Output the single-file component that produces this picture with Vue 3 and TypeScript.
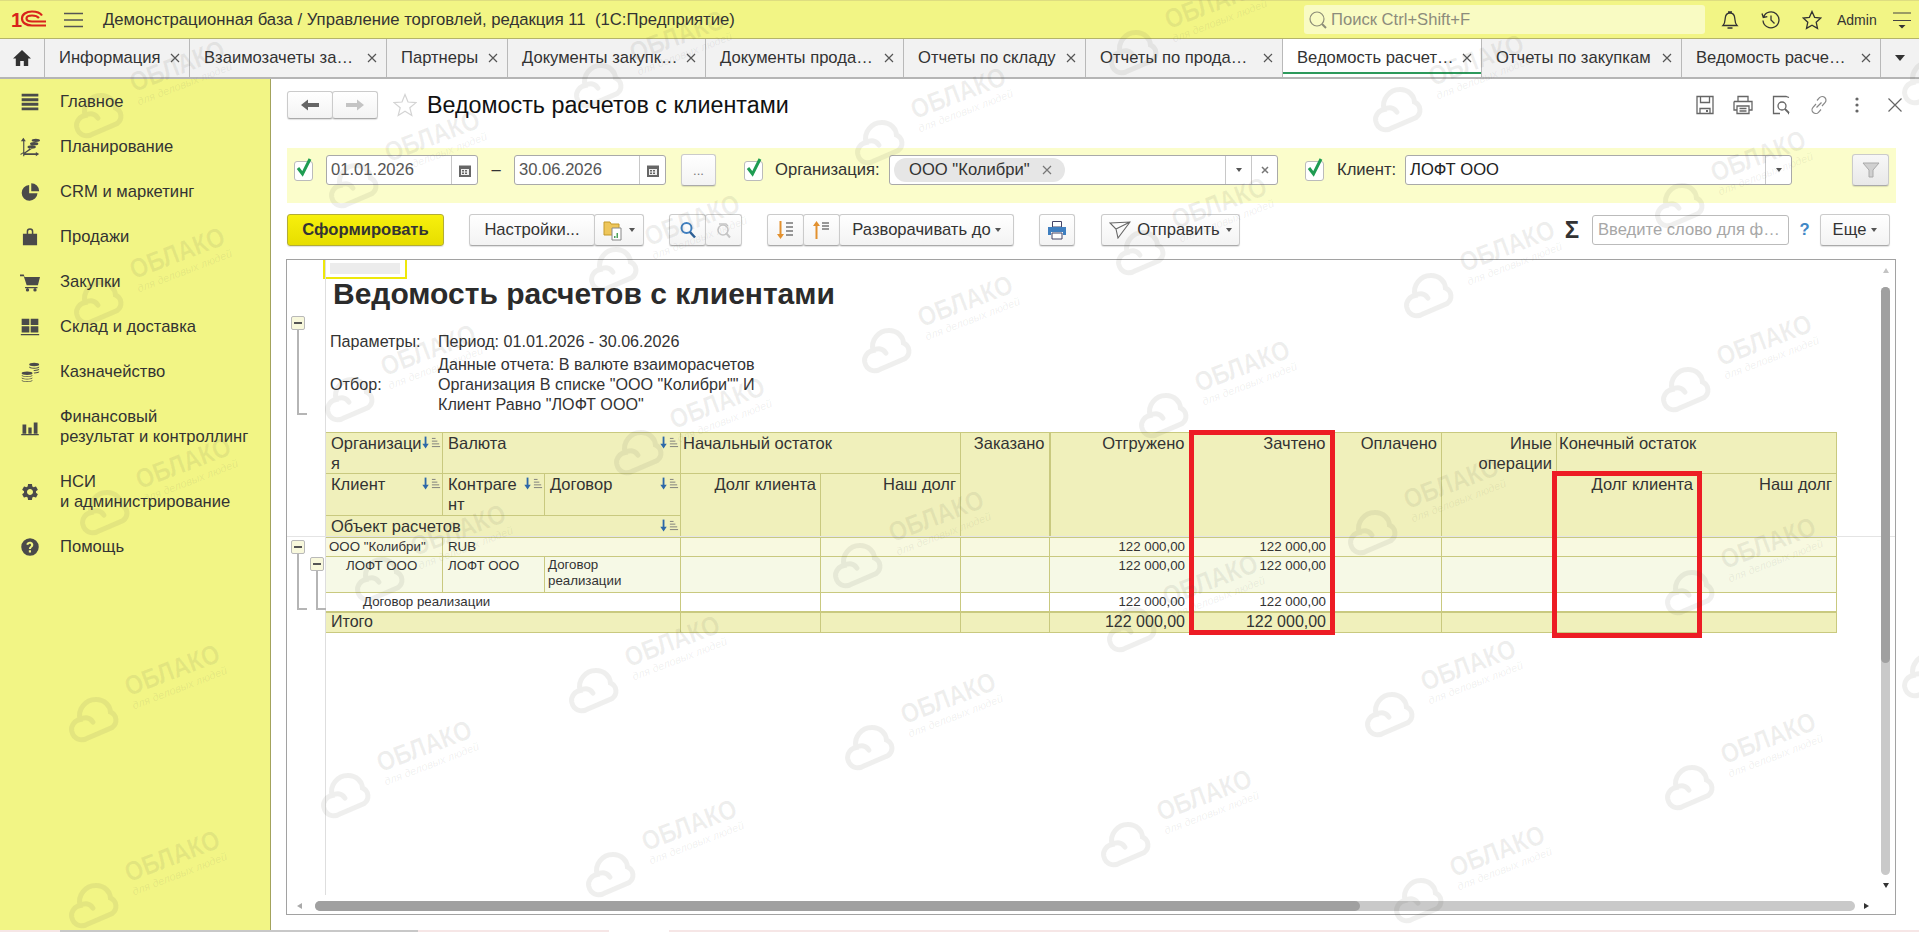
<script setup lang="ts">
type MenuItem = { label: string[]; icon: string }
type Tab = { title: string; width: number; active?: boolean }

const tabs: Tab[] = [
  { title: 'Информация', width: 145 },
  { title: 'Взаимозачеты за…', width: 197 },
  { title: 'Партнеры', width: 121 },
  { title: 'Документы закупк…', width: 198 },
  { title: 'Документы прода…', width: 198 },
  { title: 'Отчеты по складу', width: 182 },
  { title: 'Отчеты по прода…', width: 197 },
  { title: 'Ведомость расчет…', width: 199, active: true },
  { title: 'Отчеты по закупкам', width: 200 },
  { title: 'Ведомость расче…', width: 199 }
]

const menu: MenuItem[] = [
  { label: ['Главное'], icon: 'M2 2h20v3.500H2z M2 7.500h20v3.500H2z M2 13h20v3.500H2z M2 18.500h20v3.500H2z' },
  { label: ['Планирование'], icon: 'M4 1l3 4H5.200v13.500L13 13l1 1.300-7.500 5.200H19V18l4 2.500-4 2.500v-1.500H5.200V23H3.800v-3.500L1 21.500l-.6-1 3.400-2.300V5H1z M12 8a5 2 0 1 0 10 0a5 2 0 1 0-10 0z M14 4a5 2 0 1 0 10 0a5 2 0 1 0-10 0z M9 12a5 2 0 1 0 10 0a5 2 0 1 0-10 0z' },
  { label: ['CRM и маркетинг'], icon: 'M11 3.500a9.500 9.500 0 1 0 10 10H11z M13.500 1.500v9.500H23a9.500 9.500 0 0 0-9.500-9.500z' },
  { label: ['Продажи'], icon: 'M3.500 8h17v14h-17z M8 8V5.500a4 4 0 0 1 8 0V8h-1.800V5.500a2.200 2.200 0 0 0-4.400 0V8z' },
  { label: ['Закупки'], icon: 'M0 3h4.500l1 3H24l-2.500 10H8L4.500 5H0z M6 18h15v1.500H6z M7 21.500a2 2 0 1 0 4 0a2 2 0 1 0-4 0z M16 21.500a2 2 0 1 0 4 0a2 2 0 1 0-4 0z' },
  { label: ['Склад и доставка'], icon: 'M2 2h9.200v7.500H2z M12.800 2H22v7.500h-9.200z M2 11h9.200v7.500H2z M12.800 11H22v7.500h-9.200z M1 20.500h22V22H1z' },
  { label: ['Казначейство'], icon: 'M2 13.500a6.500 2 0 0 1 13 0a6.500 2 0 0 1-13 0z M2 16v-.5c2 2 11 2 13 0v.5a6.500 2 0 0 1-13 0z M2 19v-.5c2 2 11 2 13 0v.5a6.500 2 0 0 1-13 0z M2 22v-.5c2 2 11 2 13 0v.5a6.500 2 0 0 1-13 0z M11 3a6 2 0 0 1 12 0a6 2 0 0 1-12 0z M11 6v-.5c2 2 10 2 12 0V6a6 2 0 0 1-12 0z M16 9.500c3 .2 6-.2 7-1.300V9c0 .8-2.500 1.700-6 1.800z M16.500 12.500c3 .2 5.500-.3 6.500-1.300v.8c0 .8-2.500 1.700-6 1.800z' },
  { label: ['Финансовый', 'результат и контроллинг'], icon: 'M1.500 20.500h21V22h-21z M3 9h4.500v11H3z M10 12.500h4V20h-4z M16.500 6.500H21V20h-4.500z' },
  { label: ['НСИ', 'и администрирование'], icon: 'M19.140 12.940c.04-.3.06-.61.06-.94 0-.32-.02-.64-.07-.94l2.030-1.580c.18-.14.23-.41.12-.61l-1.920-3.320c-.12-.22-.37-.29-.59-.22l-2.390.96c-.5-.38-1.030-.7-1.620-.94l-.36-2.540c-.04-.24-.24-.41-.48-.41h-3.840c-.24 0-.43.17-.47.41l-.36 2.540c-.59.24-1.130.57-1.620.94l-2.390-.96c-.22-.08-.47 0-.59.22L2.740 8.870c-.12.21-.08.47.12.61l2.030 1.580c-.05.3-.09.63-.09.94s.02.64.07.94l-2.030 1.580c-.18.14-.23.41-.12.61l1.920 3.320c.12.22.37.29.59.22l2.390-.96c.5.38 1.030.7 1.620.94l.36 2.540c.05.24.24.41.48.41h3.840c.24 0 .44-.17.47-.41l.36-2.540c.59-.24 1.130-.56 1.620-.94l2.390.96c.22.08.47 0 .59-.22l1.920-3.320c.12-.22.07-.47-.12-.61l-2.010-1.580zM12 15.600c-1.980 0-3.600-1.620-3.600-3.600s1.620-3.600 3.600-3.600 3.600 1.620 3.600 3.600-1.620 3.600-3.600 3.600z' },
  { label: ['Помощь'], icon: 'M12 1.500a10.500 10.500 0 1 0 0 21a10.500 10.500 0 1 0 0-21z M13.200 18.500h-2.600V16h2.600z M15.600 11c-.8 1.300-2.400 1.600-2.400 3.500h-2.600c0-2.900 2.400-3.200 2.700-4.700.2-1-.5-1.800-1.500-1.800-1 0-1.700.7-1.900 1.700L7.600 9C8 7 9.700 5.700 12 5.700c3 0 4.700 2.700 3.600 5.300z' }
]

const columns = [117, 102, 136, 140, 140, 89, 140, 141, 111, 115, 141, 139]

const clouds: [number, number][] = [
  [97, 113], [97, 300], [103, 510], [92, 717], [92, 903],
  [352, 183], [348, 397], [378, 577], [344, 793],
  [597, 83], [612, 267], [637, 450], [592, 688], [609, 872],
  [878, 140], [885, 348], [856, 563], [868, 745],
  [1132, 50], [1139, 250], [1162, 413], [1130, 627], [1124, 842],
  [1396, 107], [1427, 293], [1371, 530], [1388, 712], [1417, 898],
  [1678, 203], [1684, 387], [1688, 590], [1688, 785],
  [1925, 80], [1925, 673]
]

const money = '122 000,00'
</script>

<template>
  <div class="app">
    <header class="topbar">
      <svg class="logo" width="36" height="22" viewBox="0 0 36 22">
        <text x="0" y="18" class="logo__one">1</text>
        <path d="M31 6.500C29 3.500 25 2.500 21 2.500c-6 0-10 3-10 7s4 7 10 7h14M28 9c-1.500-1.800-4-2.500-7-2.500-3.500 0-5.500 1.300-5.500 3s2 3 5.500 3h14" fill="none" stroke="#d8231c" stroke-width="2.200" />
      </svg>
      <svg class="topbar__burger" width="19" height="16" viewBox="0 0 19 16"><path d="M0 1.500h19M0 8h19M0 14.500h19" stroke="#555" stroke-width="1.400" /></svg>
      <span class="topbar__title">Демонстрационная база / Управление торговлей, редакция 11&nbsp; (1С:Предприятие)</span>
      <div class="search">
        <svg width="20" height="20" viewBox="0 0 20 20"><circle cx="9" cy="9" r="7" fill="none" stroke="#8d8d78" stroke-width="1.200" /><path d="M14 14l4 4" stroke="#8d8d78" stroke-width="2" /></svg>
        <span>Поиск Ctrl+Shift+F</span>
      </div>
      <svg class="topbar__icon" width="20" height="20" viewBox="0 0 20 20"><path d="M3 15.500c2-2 2-4 2.200-7C5.400 5 7.500 3 10 3s4.600 2 4.800 5.500c.2 3 .2 5 2.200 7z M8 1.800h4 M7.500 18h5" fill="none" stroke="#333" stroke-width="1.300" /></svg>
      <svg class="topbar__icon" width="20" height="20" viewBox="0 0 20 20"><path d="M2.500 7A8 8 0 1 1 2 10.500M1 3.500l1.300 4 4-.8M10 5.500V10l3.500 3.500" fill="none" stroke="#333" stroke-width="1.300" /></svg>
      <svg class="topbar__icon" width="20" height="20" viewBox="0 0 20 20"><path d="M10 1.500l2.600 5.800 6.200.7-4.600 4.200 1.300 6.200L10 15.300l-5.500 3.100 1.300-6.200L1.200 8l6.200-.7z" fill="none" stroke="#333" stroke-width="1.300" /></svg>
      <span class="topbar__user">Admin</span>
      <svg class="topbar__more" width="18" height="18" viewBox="0 0 18 18"><path d="M0 2h18M0 9.500h18" stroke="#444" stroke-width="1.200" /><path d="M5.500 14h7L9 17.500z" fill="#333" /></svg>
    </header>

    <nav class="tabs">
      <div class="tabs__home">
        <svg width="20" height="18" viewBox="0 0 20 18"><path d="M10 1L1 9.500h2.800V17h4.400v-5h3.600v5h4.400V9.500H19z" fill="#333" /></svg>
      </div>
      <div v-for="tab in tabs" :key="tab.title" class="tab" :class="{ 'tab--active': tab.active }" :style="{ width: tab.width + 'px' }">
        <span class="tab__title">{{ tab.title }}</span>
        <svg width="10" height="10" viewBox="0 0 10 10"><path d="M1 1l8 8M9 1l-8 8" stroke="#555" stroke-width="1.200" /></svg>
      </div>
      <div class="tabs__more"><i class="caret caret--big"></i></div>
    </nav>

    <div class="workspace">
      <aside class="sidebar">
        <div v-for="item in menu" :key="item.label[0]" class="menu-item" :class="{ 'menu-item--two': item.label.length > 1 }">
          <svg class="menu-item__icon" width="20" height="20" viewBox="0 0 24 24"><path :d="item.icon" fill="#4a4a4a" fill-rule="evenodd" /></svg>
          <div class="menu-item__text">
            <div v-for="line in item.label" :key="line">{{ line }}</div>
          </div>
        </div>
      </aside>

      <main class="main">
        <div class="heading">
          <div class="btn-group">
            <button class="btn btn--arrow"><svg width="18" height="12" viewBox="0 0 18 12"><path d="M0 6l7-5.500V4h11v4H7v3.500z" fill="#666" /></svg></button>
            <button class="btn btn--arrow"><svg width="18" height="12" viewBox="0 0 18 12"><path d="M18 6l-7-5.500V4H0v4h11v3.500z" fill="#c4c4c4" /></svg></button>
          </div>
          <svg class="heading__star" width="24" height="24" viewBox="0 0 24 24"><path d="M12 1.500l3 7.500 8 .6-6.200 5.100 2 7.800L12 18.200l-6.800 4.300 2-7.800L1 9.600 9 9z" fill="none" stroke="#d4d4d4" stroke-width="1.200" /></svg>
          <h1 class="heading__title">Ведомость расчетов с клиентами</h1>
          <div class="heading__actions">
            <svg width="20" height="20" viewBox="0 0 20 20"><path d="M2 1.500h16v17H2z M5.500 1.500v6h9v-6 M5 18.500v-5h10v5" fill="none" stroke="#666" stroke-width="1.300" /><path d="M11 15h2v2h-2z" fill="#666" /></svg>
            <svg width="20" height="20" viewBox="0 0 20 20"><path d="M5 6V1.500h10V6M1 6.500h18V15h-3M1 6.500V15h3M4 11h12v7.500H4z M6.500 13.500h7M6.500 16h7" fill="none" stroke="#666" stroke-width="1.300" /></svg>
            <svg width="20" height="20" viewBox="0 0 20 20"><path d="M9 18.500H2.500v-17H15l3 1M18 18.500h-1" fill="none" stroke="#666" stroke-width="1.300" /><circle cx="11" cy="11" r="4" fill="none" stroke="#666" stroke-width="1.300" /><path d="M14 14l4 4" stroke="#666" stroke-width="1.800" /></svg>
            <svg width="20" height="20" viewBox="0 0 20 20"><path d="M8 5.500l2.500-2.800a3.700 3.700 0 0 1 5.500 5L13 11M12 14.500l-2.500 2.800a3.700 3.700 0 0 1-5.500-5L7 9M7.500 12.500l5-5" fill="none" stroke="#888" stroke-width="1.200" /></svg>
            <svg width="20" height="20" viewBox="0 0 20 20"><circle cx="10" cy="4" r="1.600" fill="#666" /><circle cx="10" cy="10" r="1.600" fill="#666" /><circle cx="10" cy="16" r="1.600" fill="#666" /></svg>
            <svg width="20" height="20" viewBox="0 0 20 20"><path d="M3.500 3.500l13 13M16.500 3.500l-13 13" stroke="#666" stroke-width="1.200" /></svg>
          </div>
        </div>

        <section class="filters">
          <span class="check"><svg width="20" height="22" viewBox="0 0 20 22"><path d="M4 11l4.500 6L16 2" fill="none" stroke="#1f9c52" stroke-width="3" /></svg></span>
          <div class="field field--date">
            <span class="field__value">01.01.2026</span>
            <span class="field__btn field__btn--cal"><svg width="12" height="13" viewBox="0 0 12 13"><path d="M0 1.500h12V13H0z" fill="#666" /><path d="M2 5h8v6H2z" fill="#eee" /><path d="M3 6h2v1.500H3zM6 6h2v1.500H6zM3 8.500h2V10H3zM6 8.500h2V10H6z" fill="#666" /></svg></span>
          </div>
          <span class="filters__dash">–</span>
          <div class="field field--date field--date2">
            <span class="field__value">30.06.2026</span>
            <span class="field__btn field__btn--cal"><svg width="12" height="13" viewBox="0 0 12 13"><path d="M0 1.500h12V13H0z" fill="#666" /><path d="M2 5h8v6H2z" fill="#eee" /><path d="M3 6h2v1.500H3zM6 6h2v1.500H6zM3 8.500h2V10H3zM6 8.500h2V10H6z" fill="#666" /></svg></span>
          </div>
          <button class="btn btn--dots">...</button>
          <span class="check check--org"><svg width="20" height="22" viewBox="0 0 20 22"><path d="M4 11l4.500 6L16 2" fill="none" stroke="#1f9c52" stroke-width="3" /></svg></span>
          <label class="filters__label filters__label--org">Организация:</label>
          <div class="field field--org">
            <span class="chip">ООО "Колибри" <svg width="10" height="10" viewBox="0 0 10 10"><path d="M1 1l8 8M9 1l-8 8" stroke="#777" stroke-width="1.200" /></svg></span>
            <span class="field__btn field__btn--first"><i class="caret"></i></span>
            <span class="field__btn"><svg width="8" height="8" viewBox="0 0 8 8"><path d="M1 1l6 6M7 1L1 7" stroke="#777" stroke-width="1.500" /></svg></span>
          </div>
          <span class="check check--client"><svg width="20" height="22" viewBox="0 0 20 22"><path d="M4 11l4.500 6L16 2" fill="none" stroke="#1f9c52" stroke-width="3" /></svg></span>
          <label class="filters__label filters__label--client">Клиент:</label>
          <div class="field field--client">
            <span class="field__value field__value--dark">ЛОФТ ООО</span>
            <span class="field__btn"><i class="caret"></i></span>
          </div>
          <button class="btn btn--filter"><svg width="18" height="18" viewBox="0 0 18 18"><path d="M1 2h16l-6 7v7H7V9z" fill="#d0d0d0" stroke="#aaa" /></svg></button>
        </section>

        <section class="toolbar">
          <button class="btn btn--primary">Сформировать</button>
          <div class="btn-group btn-group--settings">
            <button class="btn btn--settings">Настройки...</button>
            <button class="btn btn--folder">
              <svg width="20" height="22" viewBox="0 0 20 22"><path d="M1 3h6l1 2h8v11H1z" fill="#eec65a" stroke="#c49a2a" /><path d="M9 9h9v12H9z" fill="#fff" stroke="#888" /><path d="M11 17h1.500v2H11zM13.500 14H15v5h-1.500z" fill="#4aa25a" /></svg>
              <i class="caret"></i>
            </button>
          </div>
          <div class="btn-group btn-group--find">
            <button class="btn btn--icon"><svg width="18" height="18" viewBox="0 0 18 18"><circle cx="7.500" cy="7" r="5" fill="none" stroke="#3f7fc0" stroke-width="2" /><path d="M11 11l5 5.500" stroke="#2d5f95" stroke-width="2.500" /></svg></button>
            <button class="btn btn--icon"><svg width="18" height="18" viewBox="0 0 18 18"><circle cx="8" cy="9" r="5" fill="none" stroke="#c5c5c5" stroke-width="1.500" /><path d="M11 12l4 4.500" stroke="#c5c5c5" stroke-width="2" /><path d="M4 3h7l2 2" fill="none" stroke="#c5c5c5" stroke-width="1.300" /></svg></button>
          </div>
          <div class="btn-group btn-group--sort">
            <button class="btn btn--icon"><svg width="20" height="20" viewBox="0 0 20 20"><path d="M4.500 1v14" stroke="#e2912f" stroke-width="2" /><path d="M1 14h7l-3.500 5z" fill="#e2912f" /><path d="M10 3h7M10 7h7M10 11h7M10 15h7" stroke="#777" stroke-width="1.300" /></svg></button>
            <button class="btn btn--icon"><svg width="20" height="20" viewBox="0 0 20 20"><path d="M4.500 19V5" stroke="#e2912f" stroke-width="2" /><path d="M1 6h7L4.500 1z" fill="#e2912f" /><path d="M10 3h7M10 6h7M10 9h7" stroke="#777" stroke-width="1.300" /></svg></button>
            <button class="btn btn--expand">Разворачивать до <i class="caret"></i></button>
          </div>
          <button class="btn btn--print"><svg width="20" height="20" viewBox="0 0 20 20"><path d="M5.500 1.500h9V7h-9z" fill="#fff" stroke="#446" /><path d="M1 7h18v8h-3v-3H4v3H1z" fill="#3f7fc0" /><path d="M5 13h10v6H5z" fill="#fff" stroke="#446" /></svg></button>
          <button class="btn btn--send">
            <svg width="22" height="18" viewBox="0 0 22 18"><path d="M1 2l20 -1L9 17 7 8z M7 8l14-7" fill="none" stroke="#666" stroke-width="1.100" /></svg>
            Отправить <i class="caret"></i>
          </button>
          <span class="toolbar__sigma">Σ</span>
          <div class="toolbar__search">Введите слово для ф…</div>
          <span class="toolbar__help">?</span>
          <button class="btn btn--more">Еще <i class="caret"></i></button>
        </section>

        <section class="report">
          <div class="report__gutter"></div>
          <div class="report__rule"></div>

          <button class="toggle toggle--top"><i></i></button>
          <div class="tree tree--top"></div>
          <button class="toggle toggle--org"><i></i></button>
          <div class="tree tree--org"></div>
          <button class="toggle toggle--client"><i></i></button>
          <div class="tree tree--client"></div>

          <div class="sheet">
            <div class="sheet__cell"><div></div></div>
            <h2 class="sheet__title">Ведомость расчетов с клиентами</h2>
            <div class="params">
              <div class="params__key params__key--gap">Параметры:</div>
              <div class="params__val params__val--gap">Период: 01.01.2026 - 30.06.2026</div>
              <div></div>
              <div class="params__val">Данные отчета: В валюте взаиморасчетов</div>
              <div class="params__key">Отбор:</div>
              <div class="params__val">Организация В списке "ООО "Колибри"" И</div>
              <div></div>
              <div class="params__val">Клиент Равно "ЛОФТ ООО"</div>
            </div>

            <table class="grid">
              <colgroup>
                <col v-for="(w, i) in columns" :key="i" :style="{ width: w + 'px' }" />
              </colgroup>
              <thead>
                <tr class="grid__h1">
                  <th>
                    <div class="th-sort th-sort--wide"><span>Организация</span><svg class="sort" width="20" height="13" viewBox="0 0 22 13"><path d="M5 0v9" stroke="#2d68a8" stroke-width="2" /><path d="M1.500 8h7L5 13z" fill="#2d68a8" /><path d="M12 2h4M12 5h6M12 8h8M12 11h9" stroke="#777" /></svg></div>
                  </th>
                  <th colspan="2">
                    <div class="th-sort"><span>Валюта</span><svg class="sort" width="20" height="13" viewBox="0 0 22 13"><path d="M5 0v9" stroke="#2d68a8" stroke-width="2" /><path d="M1.500 8h7L5 13z" fill="#2d68a8" /><path d="M12 2h4M12 5h6M12 8h8M12 11h9" stroke="#777" /></svg></div>
                  </th>
                  <th colspan="2" class="tight">Начальный остаток</th>
                  <th rowspan="3" class="r thick">Заказано</th>
                  <th rowspan="3" class="r thick">Отгружено</th>
                  <th rowspan="3" class="r thick">Зачтено</th>
                  <th rowspan="3" class="r">Оплачено</th>
                  <th rowspan="3" class="r">Иные операции</th>
                  <th colspan="2" class="tight">Конечный остаток</th>
                </tr>
                <tr class="grid__h2">
                  <th>
                    <div class="th-sort"><span>Клиент</span><svg class="sort" width="20" height="13" viewBox="0 0 22 13"><path d="M5 0v9" stroke="#2d68a8" stroke-width="2" /><path d="M1.500 8h7L5 13z" fill="#2d68a8" /><path d="M12 2h4M12 5h6M12 8h8M12 11h9" stroke="#777" /></svg></div>
                  </th>
                  <th>
                    <div class="th-sort"><span>Контрагент</span><svg class="sort" width="20" height="13" viewBox="0 0 22 13"><path d="M5 0v9" stroke="#2d68a8" stroke-width="2" /><path d="M1.500 8h7L5 13z" fill="#2d68a8" /><path d="M12 2h4M12 5h6M12 8h8M12 11h9" stroke="#777" /></svg></div>
                  </th>
                  <th>
                    <div class="th-sort"><span>Договор</span><svg class="sort" width="20" height="13" viewBox="0 0 22 13"><path d="M5 0v9" stroke="#2d68a8" stroke-width="2" /><path d="M1.500 8h7L5 13z" fill="#2d68a8" /><path d="M12 2h4M12 5h6M12 8h8M12 11h9" stroke="#777" /></svg></div>
                  </th>
                  <th rowspan="2" class="r">Долг клиента</th>
                  <th rowspan="2" class="r">Наш долг</th>
                  <th rowspan="2" class="r">Долг клиента</th>
                  <th rowspan="2" class="r">Наш долг</th>
                </tr>
                <tr class="grid__h3">
                  <th colspan="3">
                    <div class="th-sort"><span>Объект расчетов</span><svg class="sort" width="20" height="13" viewBox="0 0 22 13"><path d="M5 0v9" stroke="#2d68a8" stroke-width="2" /><path d="M1.500 8h7L5 13z" fill="#2d68a8" /><path d="M12 2h4M12 5h6M12 8h8M12 11h9" stroke="#777" /></svg></div>
                  </th>
                </tr>
              </thead>
              <tbody>
                <tr class="grid__r1">
                  <td class="pad-s">ООО "Колибри"</td>
                  <td colspan="2">RUB</td>
                  <td></td><td></td><td></td>
                  <td class="r">{{ money }}</td><td class="r">{{ money }}</td>
                  <td></td><td></td><td></td><td></td>
                </tr>
                <tr class="grid__r2">
                  <td class="pad-m">ЛОФТ ООО</td>
                  <td>ЛОФТ ООО</td>
                  <td class="small">Договор реализации</td>
                  <td></td><td></td><td></td>
                  <td class="r">{{ money }}</td><td class="r">{{ money }}</td>
                  <td></td><td></td><td></td><td></td>
                </tr>
                <tr class="grid__r3">
                  <td colspan="3" class="pad-l">Договор реализации</td>
                  <td></td><td></td><td></td>
                  <td class="r">{{ money }}</td><td class="r">{{ money }}</td>
                  <td></td><td></td><td></td><td></td>
                </tr>
                <tr class="grid__total">
                  <td colspan="3">Итого</td>
                  <td></td><td></td><td></td>
                  <td class="r">{{ money }}</td><td class="r">{{ money }}</td>
                  <td></td><td></td><td></td><td></td>
                </tr>
              </tbody>
            </table>
          </div>

          <div class="vscroll"><i class="tri tri--up"></i><div class="vscroll__track"><div class="vscroll__thumb"></div></div><i class="tri tri--down"></i></div>
          <div class="hscroll"><i class="tri tri--left"></i><div class="hscroll__track"><div class="hscroll__thumb"></div></div><i class="tri tri--right"></i></div>
        </section>
      </main>
    </div>

    <footer class="strip">
      <span class="strip__pink strip__pink--a"></span>
      <span class="strip__gray"></span>
      <span class="strip__pink strip__pink--b"></span>
      <span class="strip__white"></span>
      <span class="strip__pink strip__pink--c"></span>
    </footer>

    <div class="mark mark--one"></div>
    <div class="mark mark--two"></div>

    <div class="watermarks">
      <div v-for="c in clouds" :key="c.join()" class="wm" :style="{ left: c[0] + 'px', top: c[1] + 'px' }">
        <svg width="54" height="46" viewBox="0 0 54 46"><path d="M17 41C7 43 2 36 3 29c1-6 7-9 12-8 1-10 12-17 22-13 8 3 11 11 9 17 5 5 3 13-4 15zM15 21c6-1 10 2 11 7" fill="none" stroke="currentColor" stroke-width="5" stroke-linecap="round" /></svg>
        <div class="wm__text">
          <div class="wm__name">ОБЛАКО</div>
          <div class="wm__slogan">для деловых людей</div>
        </div>
      </div>
    </div>
  </div>
</template>

<style>
html,
body {
  margin: 0;
  background: #fff;
}
</style>

<style scoped>
.app {
  position: relative;
  display: flex;
  flex-direction: column;
  width: 1919px;
  height: 932px;
  overflow: hidden;
  font-family: "Liberation Sans", Arial, sans-serif;
  font-size: 16.6px;
  color: #333;
}

button {
  font: inherit;
  color: inherit;
}

.topbar {
  display: flex;
  flex: none;
  align-items: center;
  box-sizing: border-box;
  height: 39px;
  padding-left: 11px;
  background: #f2f585;
  border-top: 1px solid #dedd80;
  border-bottom: 1px solid #b4b46a;
}

.logo {
  margin-right: 17px;
}

.logo__one {
  font: bold 20px "Liberation Sans", sans-serif;
  fill: #d8231c;
}

.topbar__burger {
  margin-right: 20px;
}

.topbar__title {
  flex: none;
  width: 633px;
  font-size: 16.7px;
  white-space: nowrap;
}

.search {
  display: flex;
  flex: none;
  align-items: center;
  gap: 3px;
  box-sizing: border-box;
  width: 401px;
  height: 29px;
  margin-left: 568px;
  padding-left: 4px;
  background: #f9fbc3;
  border-radius: 3px;
  color: #8c8c7c;
}

.topbar__icon {
  flex: none;
  margin-left: 21px;
}

.search + .topbar__icon {
  margin-left: 15px;
}

.topbar__user {
  margin-left: 15px;
  font-size: 14px;
}

.topbar__more {
  flex: none;
  margin-left: 16px;
}

.tabs {
  display: flex;
  flex: none;
  box-sizing: border-box;
  height: 40px;
  background: #f2f2f2;
  border-bottom: 2px solid #b5b5b5;
}

.tabs__home {
  display: flex;
  align-items: center;
  justify-content: center;
  box-sizing: border-box;
  width: 45px;
  border-right: 1px solid #b9b9b9;
}

.tab {
  display: flex;
  align-items: center;
  justify-content: space-between;
  box-sizing: border-box;
  padding: 0 9px 0 14px;
  border-right: 1px solid #b9b9b9;
  white-space: nowrap;
}

.tab--active {
  background: #fff;
  box-shadow: inset 0 -3px 0 #fff, inset 0 -5px 0 #2d9a5c;
}

.tabs__more {
  display: flex;
  align-items: center;
  justify-content: center;
  width: 38px;
}

.caret {
  display: inline-block;
  border-top: 4px solid #555;
  border-right: 3px solid transparent;
  border-left: 3px solid transparent;
}

.caret--big {
  border-top-width: 6px;
  border-right-width: 5px;
  border-left-width: 5px;
  border-top-color: #333;
}

.workspace {
  display: flex;
  flex: 1;
  min-height: 0;
}

.sidebar {
  flex: none;
  box-sizing: border-box;
  width: 271px;
  background: #f2f585;
  border-right: 1px solid #a3a35c;
}

.menu-item {
  display: flex;
  align-items: center;
  height: 45px;
}

.menu-item--two {
  height: 65px;
}

.menu-item__icon {
  margin: 0 20px;
}

.menu-item__text {
  line-height: 20px;
}

.main {
  display: flex;
  flex: 1;
  flex-direction: column;
  min-width: 0;
  padding: 12px 23px 15px 16px;
}

.heading {
  display: flex;
  flex: none;
  align-items: center;
  height: 28px;
}

.btn-group {
  display: flex;
}

.btn-group .btn:not(:first-child) {
  margin-left: -1px;
}

.btn {
  display: inline-flex;
  align-items: center;
  justify-content: center;
  box-sizing: border-box;
  height: 32px;
  padding: 0;
  background: linear-gradient(#fff, #f3f3f3);
  border: 1px solid #cbcbcb;
  border-bottom-color: #aaa;
  border-radius: 3px;
  box-shadow: 0 1px 1px rgba(0, 0, 0, 0.12);
}

.btn--arrow {
  width: 46px;
  height: 28px;
}

.heading__star {
  margin-left: 15px;
}

.heading__title {
  margin: 0 0 0 10px;
  font-size: 23.3px;
  font-weight: 400;
  color: #111;
}

.heading__actions {
  display: flex;
  gap: 18px;
  margin-left: auto;
  margin-right: -9px;
}

.filters {
  display: flex;
  flex: none;
  align-items: flex-start;
  box-sizing: border-box;
  height: 55px;
  margin-top: 29px;
  padding: 7px 0 0 7px;
  background: #fbfdcb;
}

.check {
  display: block;
  flex: none;
  box-sizing: border-box;
  width: 19px;
  height: 20px;
  margin-top: 6px;
  background: #fff;
  border: 1px solid #bbb;
  border-radius: 3px;
}

.check svg {
  display: block;
  margin: -5px 0 0 -1px;
}

.field {
  display: flex;
  flex: none;
  align-items: center;
  box-sizing: border-box;
  height: 30px;
  background: #fff;
  border: 1px solid #a9a9a9;
  border-radius: 3px;
}

.field--date {
  width: 152px;
  margin-left: 13px;
}

.field--date2 {
  margin-left: 0;
}

.field__value {
  flex: 1;
  padding-left: 4px;
  color: #555;
}

.field__value--dark {
  color: #222;
}

.field__btn {
  display: flex;
  flex: none;
  align-items: center;
  justify-content: center;
  align-self: stretch;
  width: 25px;
  border-left: 1px solid #c8c8c8;
}

.filters__dash {
  width: 36px;
  line-height: 30px;
  text-align: center;
}

.btn--dots {
  flex: none;
  width: 35px;
  margin: -1px 0 0 15px;
  font-size: 13px;
  color: #777;
}

.check--org {
  margin-left: 28px;
}

.filters__label {
  flex: none;
  line-height: 30px;
  white-space: nowrap;
}

.filters__label--org {
  width: 114px;
  margin-left: 12px;
}

.field--org {
  justify-content: flex-start;
  width: 389px;
}

.chip {
  display: flex;
  align-items: center;
  gap: 12px;
  box-sizing: border-box;
  width: 171px;
  height: 24px;
  margin: 0 auto 0 4px;
  padding-left: 15px;
  background: #e6e6e6;
  border-radius: 12px;
  white-space: nowrap;
}

.check--client {
  margin-left: 27px;
}

.filters__label--client {
  width: 68px;
  margin-left: 13px;
}

.field--client {
  width: 387px;
}

.btn--filter {
  flex: none;
  width: 37px;
  margin: -1px 0 0 60px;
  background: linear-gradient(#f7f7f7, #e8e8e8);
}

.toolbar {
  display: flex;
  flex: none;
  align-items: center;
  height: 32px;
  margin-top: 11px;
}

.btn--primary {
  width: 157px;
  background: linear-gradient(#f7f00d, #e7de00);
  border-color: #b3ad35;
  font-weight: 700;
}

.btn-group--settings {
  margin-left: 25px;
}

.btn--settings {
  width: 126px;
}

.btn--folder {
  gap: 6px;
  width: 50px;
}

.btn-group--find {
  margin-left: 25px;
}

.btn--icon {
  width: 37px;
}

.btn-group--sort {
  margin-left: 25px;
}

.btn--expand {
  gap: 4px;
  width: 175px;
}

.btn--print {
  width: 36px;
  margin-left: 25px;
}

.btn--send {
  gap: 6px;
  width: 139px;
  margin-left: 26px;
}

.toolbar__sigma {
  width: 24px;
  margin-left: 320px;
  font-size: 24px;
  font-weight: 700;
  text-align: center;
}

.toolbar__search {
  box-sizing: border-box;
  width: 197px;
  height: 30px;
  margin-left: 8px;
  padding-left: 5px;
  border: 1px solid #bbb;
  border-radius: 3px;
  background: #fff;
  line-height: 28px;
  color: #a7a7a7;
  white-space: nowrap;
  overflow: hidden;
}

.toolbar__help {
  width: 31px;
  font-weight: 700;
  text-align: center;
  color: #3f87c6;
}

.btn--more {
  gap: 5px;
  width: 70px;
}

.report {
  position: relative;
  flex: 1;
  min-height: 0;
  margin-top: 13px;
  margin-left: -1px;
  border: 1px solid #a2a2a2;
  overflow: hidden;
}

.report__gutter {
  position: absolute;
  top: 0;
  bottom: 19px;
  left: 38px;
  width: 1px;
  background: #dedede;
}

.report__rule {
  position: absolute;
  top: 276px;
  left: 0;
  right: 0;
  height: 1px;
  background: #e4e4e4;
}

.toggle {
  position: absolute;
  left: 4px;
  z-index: 1;
  display: flex;
  align-items: center;
  justify-content: center;
  box-sizing: border-box;
  width: 14px;
  height: 14px;
  padding: 0;
  background: #f8f8dc;
  border: 1px solid #b9b9b9;
  border-radius: 2px;
}

.toggle i {
  display: block;
  width: 8px;
  height: 2px;
  background: #555;
}

.toggle--top {
  top: 56px;
}

.toggle--org {
  top: 280px;
}

.toggle--client {
  top: 297px;
  left: 23px;
}

.tree {
  position: absolute;
  box-sizing: border-box;
  border-bottom: 2px solid #b5b5b5;
  border-left: 2px solid #b5b5b5;
}

.tree--top {
  top: 70px;
  left: 10px;
  width: 10px;
  height: 85px;
}

.tree--org {
  top: 294px;
  left: 10px;
  width: 10px;
  height: 56px;
}

.tree--client {
  top: 311px;
  left: 29px;
  width: 10px;
  height: 39px;
}

.sheet {
  margin-left: 38px;
}

.sheet__cell {
  box-sizing: border-box;
  width: 84px;
  height: 19px;
  margin-left: -2px;
  padding: 3px 5px 0 5px;
  border: 2px solid #eee80a;
  border-top: 0;
}

.sheet__cell div {
  height: 11px;
  background: #ececec;
}

.sheet__title {
  margin: -2px 0 0 8px;
  font-size: 30px;
  line-height: 34px;
  font-weight: 700;
  color: #2b2b2b;
}

.params {
  display: grid;
  grid-template-columns: 108px auto;
  justify-content: start;
  margin: 20px 0 18px 5px;
  line-height: 20px;
  font-size: 16.15px;
}

.params__key--gap,
.params__val--gap {
  margin-bottom: 3px;
}

.grid {
  table-layout: fixed;
  width: 1511px;
  border-collapse: collapse;
  font-size: 16.5px;
}

.grid th,
.grid td {
  box-sizing: border-box;
  padding: 0 4px 0 5px;
  border: 1px solid #c9c97f;
  vertical-align: top;
  text-align: left;
  font-weight: 400;
  line-height: 20px;
}

.grid th {
  background: #f0f0bb;
}

.grid .r {
  text-align: right;
}

.grid .tight {
  padding-left: 2px;
}

.grid .thick {
  border-right-width: 2px;
}

.grid__h1 {
  height: 41px;
}

.grid__h2 {
  height: 42px;
}

.grid__h3 {
  height: 22px;
}

.th-sort {
  display: flex;
  align-items: flex-start;
  justify-content: space-between;
  margin-right: -3px;
}

.th-sort span {
  min-width: 0;
  word-break: break-all;
}

.sort {
  flex: none;
  margin-top: 3px;
}

.th-sort--wide .sort {
  margin-left: -4px;
}

.grid td {
  font-size: 13.3px;
  line-height: 17px;
}

.grid__r1 {
  height: 19px;
  background: #f8f9e0;
}

.grid__r2 {
  height: 36px;
  background: #f6f9e6;
}

.grid__r3 {
  height: 19px;
}

.grid__total {
  height: 21px;
  background: #f0f0bb;
}

.grid .grid__total td {
  font-size: 16px;
  line-height: 18px;
  border-top-width: 2px;
}

.grid .pad-s {
  padding-left: 3px;
}

.grid .pad-m {
  padding-left: 20px;
}

.grid .pad-l {
  padding-left: 37px;
}

.grid .small {
  padding: 0 20px 0 3px;
  line-height: 16px;
}

.vscroll {
  position: absolute;
  top: 8px;
  right: 5px;
  bottom: 26px;
  display: flex;
  flex-direction: column;
  align-items: center;
  width: 9px;
}

.vscroll__track {
  flex: 1;
  width: 9px;
  margin: 14px 0 8px;
  background: #c9c9c9;
  border-radius: 5px;
}

.vscroll__thumb {
  height: 376px;
  background: #a0a0a0;
  border-radius: 5px;
}

.hscroll {
  position: absolute;
  bottom: 3px;
  left: 10px;
  right: 26px;
  display: flex;
  align-items: center;
  height: 10px;
}

.hscroll__track {
  flex: 1;
  height: 10px;
  margin: 0 9px 0 13px;
  background: #c9c9c9;
  border-radius: 5px;
}

.hscroll__thumb {
  width: 1045px;
  height: 10px;
  background: #a0a0a0;
  border-radius: 5px;
}

.tri {
  flex: none;
  display: block;
  width: 0;
  height: 0;
}

.tri--up {
  border-right: 3px solid transparent;
  border-bottom: 5px solid #c4c4c4;
  border-left: 3px solid transparent;
}

.tri--down {
  border-top: 5px solid #333;
  border-right: 3px solid transparent;
  border-left: 3px solid transparent;
}

.tri--left {
  border-top: 3px solid transparent;
  border-right: 5px solid #aaa;
  border-bottom: 3px solid transparent;
}

.tri--right {
  border-top: 3px solid transparent;
  border-bottom: 3px solid transparent;
  border-left: 5px solid #333;
}

.strip {
  display: flex;
  flex: none;
  height: 2px;
}

.strip__pink {
  background: #f6e6e6;
}

.strip__pink--a {
  width: 60px;
}

.strip__gray {
  width: 358px;
  background: #c8c8c8;
}

.strip__pink--b {
  width: 191px;
}

.strip__white {
  width: 60px;
}

.strip__pink--c {
  flex: 1;
}

.mark {
  position: absolute;
  box-sizing: border-box;
  border: 5px solid #ed1c24;
}

.mark--one {
  top: 430px;
  left: 1189px;
  width: 146px;
  height: 205px;
}

.mark--two {
  top: 471px;
  left: 1552px;
  width: 150px;
  height: 167px;
}

.watermarks {
  position: absolute;
  inset: 0;
  overflow: hidden;
  pointer-events: none;
  color: rgba(80, 80, 70, 0.09);
}

.wm {
  position: absolute;
  width: 0;
  height: 0;
  transform: rotate(-21deg);
}

.wm svg {
  position: absolute;
  top: -23px;
  left: -27px;
}

.wm__text {
  position: absolute;
  top: -29px;
  left: 42px;
  white-space: nowrap;
}

.wm__name {
  font-size: 27px;
  line-height: 28px;
  font-weight: 700;
  transform: scaleX(0.86);
  transform-origin: left center;
}

.wm__slogan {
  font-size: 11px;
  line-height: 11px;
  font-style: italic;
}
</style>
